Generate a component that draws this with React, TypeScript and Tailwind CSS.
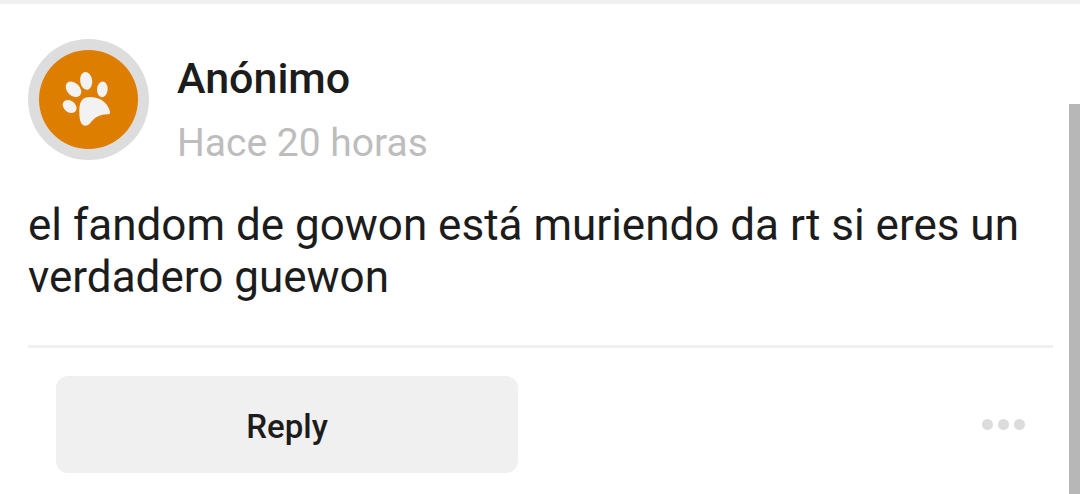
function PawAvatar() {
  return (
    <svg viewBox="0 0 121 121" className="size-[121px] shrink-0" role="img" aria-label="Avatar">
      <circle cx="60.5" cy="60.5" r="60.5" fill="#dddddd" />
      <circle cx="60.5" cy="60.5" r="49.5" fill="#de7e00" />
      <g transform="translate(22 21) scale(0.33333)" fill="#f2f2f2">
        <ellipse cx="108.5" cy="62.5" rx="18" ry="27" transform="rotate(-8 108.5 62.5)" />
        <ellipse cx="70.5" cy="88" rx="19" ry="27" transform="rotate(-46 70.5 88)" />
        <ellipse cx="157" cy="88" rx="16" ry="23.5" transform="rotate(5 157 88)" />
        <ellipse cx="59" cy="139.5" rx="17" ry="23" transform="rotate(-51 59 139.5)" />
        <path d="M97 119C104 110 120 109 137 113C158 117 176 135 180 155C181 162 177 163 171 163C152 164 138 170 128 181C120 190 116 197 106 197C94 197 88 182 88 158C88 140 89 128 97 119Z" />
      </g>
    </svg>
  );
}

export default function App() {
  return (
    <div className="flex min-h-screen flex-col border-t-4 border-[#f0f0f0] bg-white font-[Roboto,sans-serif] text-[#1c1c1c]">
      <div className="flex flex-1">
        <article className="min-w-0 flex-1 pt-[35px] pr-4 pb-5 pl-7">
          <header className="flex gap-7">
            <PawAvatar />
            <div className="pt-[13px]">
              <h1 className="text-[43px] leading-[52px] font-medium">Anónimo</h1>
              <p className="pt-[13px] text-[39px] leading-[52px] text-[#bdbdbd]">Hace 20 horas</p>
            </div>
          </header>
          <p className="pt-[30px] text-[44px] leading-[52px]">
            el fandom de gowon está muriendo da rt si eres un verdadero guewon
          </p>
          <footer className="mt-[42px] flex items-center justify-between border-t-3 border-[#f0f0f0] px-7 pt-7">
            <button
              type="button"
              className="h-[97px] w-[47.7%] rounded-xl bg-[#f0f0f0] pt-1 text-[33px] font-medium"
            >
              Reply
            </button>
            <button type="button" aria-label="More options" className="flex gap-[5px]">
              <span className="size-[11px] rounded-full bg-[#dcdcdc]" />
              <span className="size-[11px] rounded-full bg-[#dcdcdc]" />
              <span className="size-[11px] rounded-full bg-[#dcdcdc]" />
            </button>
          </footer>
        </article>
        <div className="flex w-[11px] flex-col pt-[100px]" aria-hidden="true">
          <div className="flex-1 bg-[#b7b7b7]" />
        </div>
      </div>
    </div>
  );
}
